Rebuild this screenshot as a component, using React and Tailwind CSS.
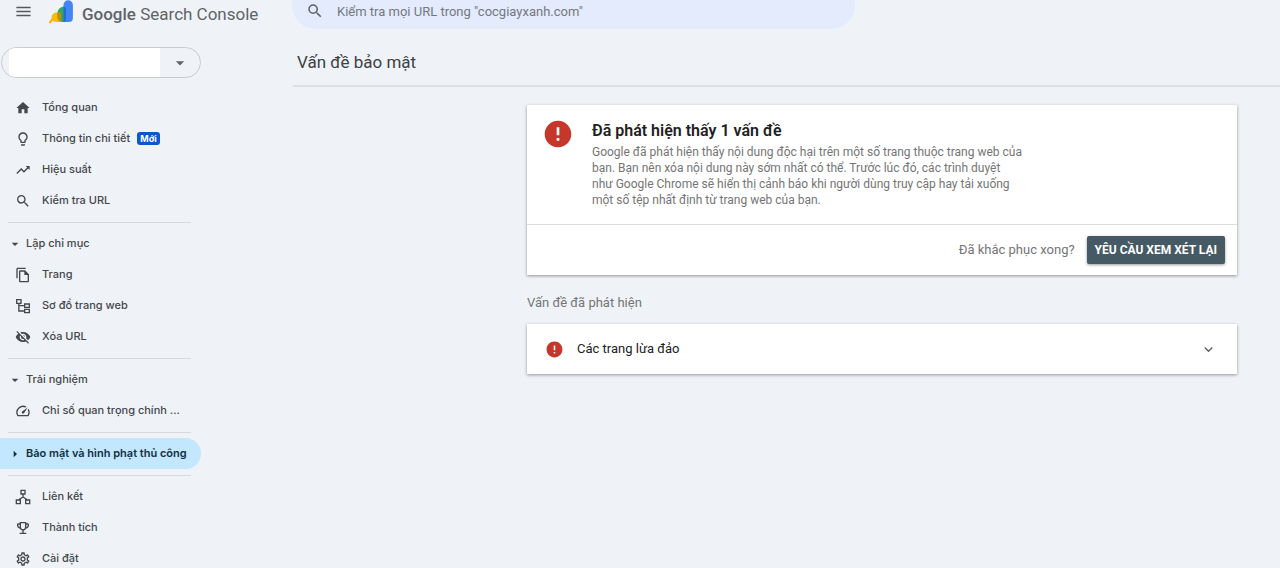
import {
  MdHome, MdLightbulbOutline, MdTrendingUp, MdSearch, MdArrowDropDown, MdArrowRight,
  MdOutlineFileCopy, MdVisibilityOff, MdOutlineSpeed, MdOutlineEmojiEvents,
  MdOutlineSettings, MdMenu, MdError, MdKeyboardArrowDown,
} from "react-icons/md";

function SitemapIcon({ className }) {
  return (
    <svg viewBox="0 0 24 24" className={className} fill="none" stroke="currentColor" strokeWidth="2" aria-hidden="true">
      <path d="M2.500 2.500h6.500v5.500H2.500zM14.500 9h7v5h-7zM14.500 17h7v5h-7zM5.800 8v11.500h8.700M5.800 11.500h8.700" />
    </svg>
  );
}

function LinksIcon({ className }) {
  return (
    <svg viewBox="0 0 24 24" className={className} fill="none" stroke="currentColor" strokeWidth="2" aria-hidden="true">
      <path d="M9 2h6v5.500H9zM2 16.500h6v5.500H2zM16 16.500h6v5.500h-6zM12 7.500V12M5 16.500L12 12l7 4.500" />
    </svg>
  );
}

function Logo() {
  return (
    <svg viewBox="0 0 26 26" className="h-[26px] w-[26px] shrink-0" aria-hidden="true">
      <path d="M4.500 19 2 22.500" stroke="#f9ab00" strokeWidth="2" strokeLinecap="round" />
      <path d="M3.500 17.500a5 5 0 0 1 5-5H13V22H8.500a5 5 0 0 1-5-4.500Z" fill="#fbbc04" />
      <path d="M9.500 13a6.500 6.500 0 0 1 6.500-6.500h2V22h-3.500a5 5 0 0 1-5-5Z" fill="#34a853" />
      <path d="M9.500 14v3a5 5 0 0 0 3.500 4.800V12.800h-3.300Z" fill="#c98a1a" />
      <path d="M15.500 5a4.700 4.700 0 0 1 9.400 0v13a4 4 0 0 1-4 4h-5.400Z" fill="#4285f4" />
      <path d="M15.500 6.600V22h1a3.500 3.500 0 0 0 1.500-3V9a3 3 0 0 0-2.500-2.400Z" fill="#1f6fd0" />
    </svg>
  );
}

function NavItem({ icon: Icon, label, badge }) {
  return (
    <a href="#" className="flex h-[31px] items-center gap-[11px] pl-[15px] text-[11px] font-medium text-[#44474b]">
      <Icon className="h-4 w-4 shrink-0" />
      <span className="whitespace-nowrap">{label}</span>
      {badge && (
        <span className="-ml-1 rounded-[3px] bg-[#0b57d0] px-[3px] text-[9px] leading-[13px] font-bold text-white">{badge}</span>
      )}
    </a>
  );
}

function NavSection({ label }) {
  return (
    <button type="button" aria-expanded="true" className="flex h-[31px] w-full items-center gap-[3px] pl-[7px] text-[11px] font-medium text-[#44474b]">
      <MdArrowDropDown className="h-4 w-4 shrink-0" />
      {label}
    </button>
  );
}

function Divider() {
  return <hr className="mt-[6px] mr-[10px] mb-[5px] ml-2 border-[#d5d8dd]" />;
}

function Sidebar() {
  return (
    <aside className="w-[201px] shrink-0 pt-[18px] font-[Inter,sans-serif]">
      <div className="ml-px flex h-[31px] items-center overflow-hidden rounded-full border border-[#c8cbd0] pl-[7px]">
        <select aria-label="Sản phẩm" className="h-full w-[151px] appearance-none bg-white" />
        <span className="flex flex-1 justify-center">
          <MdArrowDropDown className="h-5 w-5 text-[#5f6368]" />
        </span>
      </div>
      <nav className="mt-[14px]">
        <NavItem icon={MdHome} label="Tổng quan" />
        <NavItem icon={MdLightbulbOutline} label="Thông tin chi tiết" badge="Mới" />
        <NavItem icon={MdTrendingUp} label="Hiệu suất" />
        <NavItem icon={MdSearch} label="Kiểm tra URL" />
        <Divider />
        <NavSection label="Lập chỉ mục" />
        <NavItem icon={MdOutlineFileCopy} label="Trang" />
        <NavItem icon={SitemapIcon} label="Sơ đồ trang web" />
        <NavItem icon={MdVisibilityOff} label="Xóa URL" />
        <Divider />
        <NavSection label="Trải nghiệm" />
        <NavItem icon={MdOutlineSpeed} label="Chỉ số quan trọng chính ..." />
        <Divider />
        <button type="button" aria-expanded="false" className="flex h-[31px] w-full items-center gap-[3px] rounded-r-full bg-[#c2e7ff] pl-[7px] text-[11px] font-semibold whitespace-nowrap text-[#12303f]">
          <MdArrowRight className="h-4 w-4 shrink-0" />
          Bảo mật và hình phạt thủ công
        </button>
        <Divider />
        <NavItem icon={LinksIcon} label="Liên kết" />
        <NavItem icon={MdOutlineEmojiEvents} label="Thành tích" />
        <NavItem icon={MdOutlineSettings} label="Cài đặt" />
      </nav>
    </aside>
  );
}

const cardClass = "bg-white shadow-[0_1px_3px_rgba(0,0,0,0.4)]";

export default function App() {
  return (
    <div className="h-screen overflow-hidden bg-[#eff3f8] font-[Roboto,sans-serif]">
      <header className="flex h-[29px] items-start">
        <div className="flex w-[292px] shrink-0 items-start pl-[14px]">
          <button type="button" aria-label="Trình đơn" className="mt-[2px] text-[#55595e]">
            <MdMenu className="h-[19px] w-[19px]" />
          </button>
          <a href="#" className="ml-[15px] flex items-start gap-2 whitespace-nowrap text-[#5f6368]">
            <Logo />
            <span className="pt-[2px] text-[17px] leading-[24px]"><span className="font-medium">Google</span> Search Console</span>
          </a>
        </div>
        <label className="flex h-[29px] w-[563px] items-start rounded-b-[24px] bg-[#e3ebfd] pl-[14px] text-[#5f6368]">
          <MdSearch className="mt-[2px] h-[18px] w-[18px] shrink-0" />
          <input type="search" aria-label="Kiểm tra URL" placeholder={'Kiểm tra mọi URL trong "cocgiayxanh.com"'} className="ml-[13px] h-[22px] flex-1 bg-transparent text-[13px] outline-none placeholder:text-[#74787f]" />
        </label>
      </header>
      <div className="flex">
        <Sidebar />
        <main className="ml-[92px] min-w-0 flex-1">
          <h1 className="flex h-[58px] items-center border-b-2 border-[#dde1e6] pt-3 pl-1 text-[17px] text-[#3c4043]">Vấn đề bảo mật</h1>
          <div className="mr-[43px] ml-auto max-w-[710px] pt-[18px]">
            <section className={cardClass}>
              <div className="flex h-[120px] items-start border-b border-[#dadce0] pl-[15px]">
                <MdError className="mt-[13px] h-8 w-8 shrink-0 text-[#c5362b]" />
                <div className="ml-[18px] pt-[15px]">
                  <h2 className="text-[16px] leading-[22px] font-semibold text-[#212121]">Đã phát hiện thấy 1 vấn đề</h2>
                  <p className="mt-[2px] text-[12px] leading-[16px] text-[#757575]">
                    Google đã phát hiện thấy nội dung độc hại trên một số trang thuộc trang web của<br />
                    bạn. Bạn nên xóa nội dung này sớm nhất có thể. Trước lúc đó, các trình duyệt<br />
                    như Google Chrome sẽ hiển thị cảnh báo khi người dùng truy cập hay tải xuống<br />
                    một số tệp nhất định từ trang web của bạn.
                  </p>
                </div>
              </div>
              <div className="flex h-[50px] items-center justify-end gap-3 pr-3">
                <span className="text-[13px] text-[#757575]">Đã khắc phục xong?</span>
                <button type="button" className="h-[28px] rounded-[2px] bg-[#455a64] px-2 text-[12px] font-bold whitespace-nowrap text-white shadow-[0_1px_3px_rgba(0,0,0,0.4)]">YÊU CẦU XEM XÉT LẠI</button>
              </div>
            </section>
            <h3 className="mt-[18px] text-[13px] leading-[20px] text-[#757575]">Vấn đề đã phát hiện</h3>
            <button type="button" aria-expanded="false" className={`mt-[11px] flex h-[50px] w-full items-center pr-5 pl-[18px] text-[13px] text-[#212121] ${cardClass}`}>
              <MdError className="h-[19px] w-[19px] text-[#c5362b]" />
              <span className="ml-[13px] flex-1 text-left">Các trang lừa đảo</span>
              <MdKeyboardArrowDown className="h-[17px] w-[17px] text-[#616161]" />
            </button>
          </div>
        </main>
      </div>
    </div>
  );
}
